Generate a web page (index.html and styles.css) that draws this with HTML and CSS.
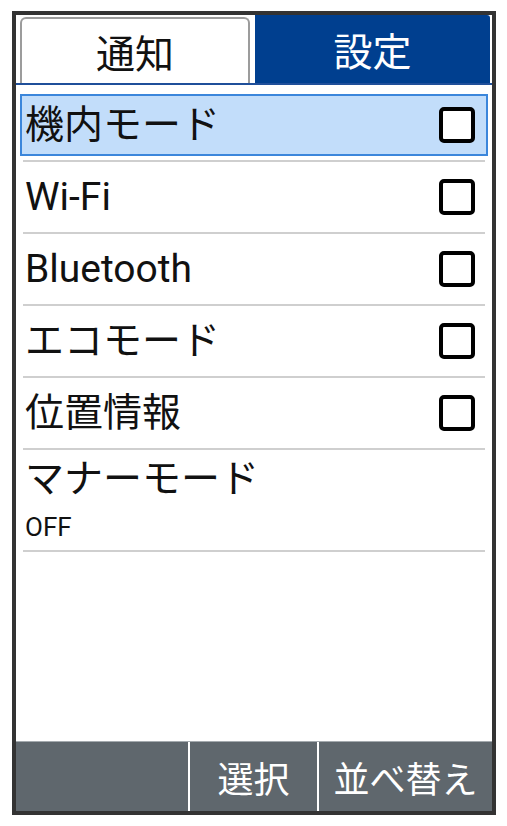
FILE: index.html
```html
<!DOCTYPE html>
<html lang="ja">
  <head>
    <meta charset="UTF-8" />
    <meta name="viewport" content="width=device-width, initial-scale=1.0" />
    <title>設定</title>
    <link rel="stylesheet" href="styles.css">
  </head>

  <body>
    <div class="phone">
      <!-- タブ -->
      <div class="tabs">
        <div class="tab">通知</div>
        <div class="tab active">設定</div>
      </div>

      <!-- 設定リスト -->
      <ul class="list">
        <li class="item selected">
          <div class="item-body">
            <span class="label">機内モード</span>
            <span class="check"></span>
          </div>
        </li>
        <li class="item">
          <div class="item-body">
            <span class="label">Wi-Fi</span>
            <span class="check"></span>
          </div>
        </li>
        <li class="item">
          <div class="item-body">
            <span class="label">Bluetooth</span>
            <span class="check"></span>
          </div>
        </li>
        <li class="item">
          <div class="item-body">
            <span class="label">エコモード</span>
            <span class="check"></span>
          </div>
        </li>
        <li class="item">
          <div class="item-body">
            <span class="label">位置情報</span>
            <span class="check"></span>
          </div>
        </li>
        <li class="item two-line">
          <div class="item-body">
            <span class="label">マナーモード</span>
            <span class="sub">OFF</span>
          </div>
        </li>
      </ul>

      <!-- ソフトキー -->
      <div class="softkeys">
        <div class="key"></div>
        <div class="key">選択</div>
        <div class="key">並べ替え</div>
      </div>
    </div>
  </body>
</html>
```

FILE: styles.css
```css
body {
  margin: 0;
  background-color: white;
  font-family: Roboto, "Noto Sans CJK JP", sans-serif;
  color: #111;
}

.phone {
  box-sizing: border-box;
  width: 484px;
  height: 804px;
  margin: 11px 0 0 12px;
  border: 4px solid #333;
  display: flex;
  flex-direction: column;
  background-color: white;
}

.tabs {
  display: flex;
  gap: 5px;
  height: 68px;
  padding: 0 2px 0 4px;
  border-bottom: 2px solid #1f4f9a;
}

.tab {
  box-sizing: border-box;
  width: 230px;
  margin-top: 2px;
  border: 2px solid #9c9c9c;
  border-bottom: none;
  border-radius: 6px 6px 0 0;
  display: flex;
  align-items: center;
  justify-content: center;
  font-size: 39px;
  color: #111;
}

.tab.active {
  flex: 1;
  margin-top: 0;
  border: none;
  border-radius: 0 3px 0 0;
  background-color: #003f8f;
  color: white;
}

.list {
  flex: 1;
  list-style-type: none;
  margin: 0;
  padding: 5px 0 0;
}

.item {
  padding: 4px 4px 0;
}

.item::after {
  content: "";
  display: block;
  height: 2px;
  margin: 4px 3px 0;
  background-color: #cfcfcf;
}

.item-body {
  box-sizing: border-box;
  height: 62px;
  display: flex;
  align-items: center;
  justify-content: space-between;
  padding: 0 11px 0 3px;
  border: 2px solid transparent;
}

.item.selected .item-body {
  background-color: #c2ddfa;
  border-color: #3b86db;
}

.label {
  font-size: 39px;
  line-height: 44px;
}

.check {
  box-sizing: border-box;
  width: 36px;
  height: 36px;
  border: 4px solid #000;
  border-radius: 5px;
  background-color: white;
}

.item.two-line .item-body {
  height: auto;
  flex-direction: column;
  align-items: flex-start;
  justify-content: flex-start;
  padding-top: 0;
}

.item.two-line .label {
  line-height: 46px;
}

.sub {
  margin-top: 8px;
  font-size: 26px;
  line-height: 34px;
}

.softkeys {
  height: 70px;
  display: flex;
  gap: 2px;
  background-color: white;
  border-top: 1px solid #a4aaae;
  box-sizing: border-box;
}

.key {
  background-color: #5f676d;
  color: white;
  font-size: 36px;
  display: flex;
  align-items: center;
  justify-content: center;
}

.key:nth-child(1) {
  width: 172px;
}

.key:nth-child(2) {
  width: 127px;
}

.key:nth-child(3) {
  flex: 1;
}
```
